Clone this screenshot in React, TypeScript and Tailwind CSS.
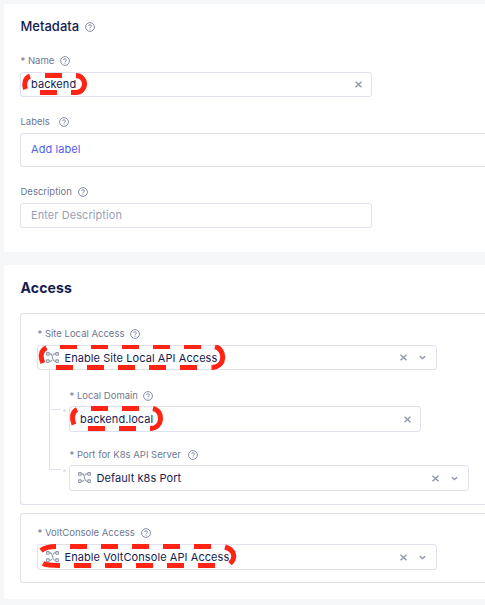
import React from 'react';

function Help({ className = '' }: { className?: string }) {
  return (
    <svg className={`shrink-0 ${className}`} width="10" height="10" viewBox="0 0 10 10" fill="none" stroke="#858fa8" strokeWidth="1">
      <circle cx="5" cy="5" r="4.4" />
      <path d="M3.7 4a1.3 1.3 0 1 1 1.8 1.2q-.5.2-.5.8v.2M5 6.8v.9" />
    </svg>
  );
}

function Cross() {
  return (
    <svg className="shrink-0" width="7" height="7" viewBox="0 0 7 7" stroke="#8f98ad" strokeWidth="1.4">
      <path d="M.5.7l6 5.6M6.5.7l-6 5.6" />
    </svg>
  );
}

function Chevron() {
  return (
    <svg className="ml-[12px] shrink-0" width="7" height="7" viewBox="0 0 7 7" fill="none" stroke="#8f98ad" strokeWidth="1.4">
      <path d="M.8 2.2l2.700 2.400 2.700-2.400" />
    </svg>
  );
}

function Nodes() {
  return (
    <svg className="mr-[6px] shrink-0" width="13" height="12" viewBox="0 0 13 12" fill="none" stroke="#8e97ab" strokeWidth="1.1">
      <rect x=".6" y=".6" width="2.6" height="2.6" rx=".4" />
      <rect x="9.8" y=".6" width="2.6" height="2.6" rx=".4" />
      <rect x=".6" y="7.9" width="2.6" height="2.6" rx=".4" />
      <rect x="9.8" y="7.9" width="2.6" height="2.6" rx=".4" />
      <path d="M3.2 1.9h1.2c2.6 0 1.6 7.3 4.3 7.3h1.1M9.8 1.9H8.7c-.8 0-1.2.6-1.4 1.4M3.2 9.2h1.2c.8 0 1.2-.6 1.4-1.4" />
    </svg>
  );
}

function Label({ text, className = '', gap = 'ml-[6px]' }: { text: string; className?: string; gap?: string }) {
  return (
    <div className={`flex h-3 items-center text-[9.5px] leading-3 whitespace-nowrap text-[#6f7891] ${className}`}>
      <span>{text}</span>
      <Help className={gap} />
    </div>
  );
}

type FieldProps = { value: string; className: string; select?: boolean };

function Field({ value, className, select = false }: FieldProps) {
  return (
    <div className={`flex items-center rounded-[3px] border border-[#dfe0f0] bg-white ${className}`}>
      {select && <Nodes />}
      <span className="flex-1 text-[11px] leading-4 tracking-[0.07px] whitespace-nowrap text-[#161c50]">{value}</span>
      <Cross />
      {select && <Chevron />}
    </div>
  );
}

function Marker({ d, className, width }: { d: string; className: string; width: number }) {
  return (
    <svg className={`absolute ${className}`} width={width} height="28" viewBox={`0 0 ${width} 28`} fill="none" stroke="#ff2414" strokeWidth="5">
      <path d={d} />
    </svg>
  );
}

function Branch({ className }: { className: string }) {
  return (
    <div className={`flex items-end ${className}`}>
      <div className="h-full w-3 border-b border-l border-[#dfe0f0]" />
      <i className="mb-[-2px] ml-[2px] block size-[3px] rounded-full bg-[#dfe0f0]" />
    </div>
  );
}

export default function App() {
  return (
    <div className="h-[605px] w-[485px] overflow-hidden bg-[#f6f7f9] pt-1 pl-1 font-['Inter',sans-serif]">
      <section className="h-[248px] rounded-l-[2px] bg-white pt-[15px] pl-4">
        <div className="flex h-4 items-center">
          <h2 className="-mt-[2px] pl-[0.5px] text-[13px] leading-4 font-medium text-[#161c50]">Metadata</h2>
          <Help className="ml-[6px]" />
        </div>
        <Label text="* Name" className="mt-5 pl-[0.5px]" gap="ml-[5.5px]" />
        <div className="relative mt-[5px]">
          <Field value="backend" className="h-[25px] w-[352px] pr-[9px] pb-px pl-[10px]" />
          <Marker className="top-0 left-0" width={70} d="M10 4.2C5 6 3.5 12 5.5 17.2M25 3.5h17M20 20.5h17M56 3.5A8.5 8.5 0 0 1 56 20.5H51" />
        </div>
        <Label text="Labels" className="mt-[19px] pl-[0.5px]" gap="ml-[9px]" />
        <div className="mt-[5px] flex h-[34px] items-center rounded-l-[3px] border border-r-0 border-[#dfe0f0] pb-px pl-[10px] text-[11px] tracking-[0.07px] text-[#4f60ec]">Add label</div>
        <Label text="Description" className="mt-[19px] pl-[0.5px]" />
        <input className="mt-[5px] block h-[25px] w-[352px] rounded-[3px] border border-[#dfe0f0] pb-px pl-[10px] text-[11px] tracking-[0.07px] placeholder:text-[#98a1b3] placeholder:opacity-100" placeholder="Enter Description" />
      </section>

      <section className="mt-[13px] h-[334px] rounded-l-[2px] bg-white pt-[14px] pl-4">
        <h2 className="h-[18px] pl-[0.5px] text-[14px] leading-[18px] font-bold tracking-[0.15px] text-[#161c50]">Access</h2>
        <div className="mt-4 h-[192px] rounded-l-[3px] border border-r-0 border-[#dfe0f0] pt-[13px] pl-4">
          <Label text="* Site Local Access" className="pt-px pl-[0.5px]" />
          <div className="relative mt-[6px]">
            <Field select value="Enable Site Local API Access" className="h-[25px] w-[400px] pr-[10px] pl-[7.5px]" />
            <Marker className="top-0 left-0" width={195} d="M9.5 2.8C3.5 5.5 3 12 6 18M23 1.5h17M54 1.5h17M85 1.5h17M116 1.5h17M147 1.5h17M178 1.5C188.5 4 189 22.5 174.5 22.5M19 22.5h17M50 22.5h17M81 22.5h17M112 22.5h17M143 22.5h17" />
          </div>
          <div className="flex">
            <div className="w-8 shrink-0 pl-3">
              <Branch className="h-10" />
              <Branch className="h-[60px]" />
            </div>
            <div className="pt-[19px]">
              <Label text="* Local Domain" className="pt-px pl-[0.5px]" gap="ml-[5.5px]" />
              <div className="relative mt-[5px]">
                <Field value="backend.local" className="h-[26px] w-[352px] pr-[9px] pl-[10px]" />
                <Marker className="top-0 left-0" width={100} d="M8 3.5C2.8 6 2.5 13 5 18.5M22 2.5h17M53 2.5h17M84 2.5C95 5 94 22.5 81 22.5M19 22.5h17M50 22.5h17" />
              </div>
              <Label text="* Port for K8s API Server" className="mt-4 pt-px pl-[0.5px]" gap="ml-[7px]" />
              <Field select value="Default k8s Port" className="mt-[5px] h-[26px] w-[400px] pr-[10px] pl-[7.5px]" />
            </div>
          </div>
        </div>
        <div className="mt-2 h-[70px] rounded-l-[3px] border border-r-0 border-[#dfe0f0] pt-3 pl-4">
          <Label text="* VoltConsole Access" className="pt-px pl-[0.5px]" />
          <div className="relative mt-[6px]">
            <Field select value="Enable VoltConsole API Access" className="h-[26px] w-[400px] pr-[10px] pl-[7.5px]" />
            <Marker className="top-0 left-0" width={205} d="M4 6.5Q9 2.5 19 2.5M33 2.5h17M64 2.5h17M95 2.5h17M126 2.5h17M157 2.5h17M188 3C198 6 199 14 193 19.5M6 19.5Q10 21.5 23 21.5M37 21.5h17M68 21.5h17M99 21.5h17M130 21.5h17M161 21.5h17" />
          </div>
        </div>
      </section>
    </div>
  );
}
